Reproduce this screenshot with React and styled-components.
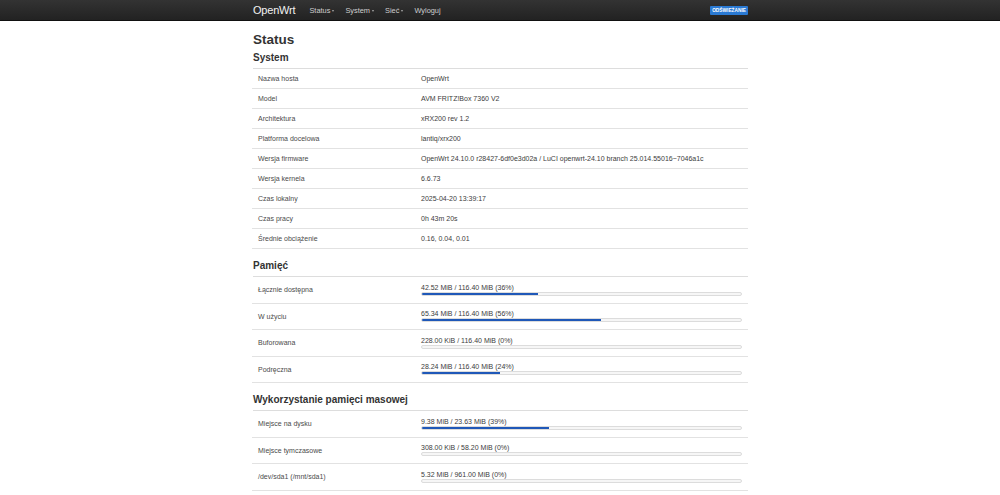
import React from "react"
import styled, { createGlobalStyle } from "styled-components"

const GlobalStyle = createGlobalStyle`
  body {
    margin: 0;
    background: #fff;
    font-family: "Liberation Sans", Arial, sans-serif;
    color: #404040;
  }
`

const Navbar = styled.header`
  height: 21px;
  background: linear-gradient(#333, #222);
  border-bottom: 1px solid #111;
  box-sizing: border-box;
`
const NavInner = styled.div`
  width: 496px;
  margin: 0 auto;
  height: 100%;
  display: flex;
  align-items: center;
`
const Brand = styled.span`
  font-size: 11px;
  color: #f2f2f2;
  margin: 0 14px 0 1px;
  letter-spacing: -0.2px;
`
const Menu = styled.nav`
  display: flex;
  gap: 11px;
  flex: 1;
`
const MenuItem = styled.span`
  font-size: 7.4px;
  color: #cfcfcf;
  display: flex;
  align-items: center;
  gap: 2px;
`
const Caret = styled.span`
  width: 0;
  height: 0;
  border-left: 1.5px solid transparent;
  border-right: 1.5px solid transparent;
  border-top: 2px solid #aaa;
  margin-top: 1px;
`
const RefreshButton = styled.span`
  background: #2a7ad4;
  color: #fff;
  font-size: 4.8px;
  font-weight: bold;
  padding: 2px 2px;
  border-radius: 1px;
  line-height: 5px;
`

const Main = styled.main`
  width: 496px;
  margin: 0 auto;
  padding-top: 10px;
`
const Title = styled.h2`
  font-size: 13.5px;
  font-weight: bold;
  color: #333;
  margin: 0 0 0 1px;
  line-height: 18px;
`
const SectionTitle = styled.h3`
  font-size: 10px;
  font-weight: bold;
  color: #333;
  margin: ${p => (p.$first ? "3px" : "11px")} 0 0 1px;
  line-height: 12px;
  padding-bottom: 4px;
  border-bottom: 1px solid #ddd;
`
const Table = styled.div`
  display: flex;
  flex-direction: column;
`
const Row = styled.div`
  display: grid;
  grid-template-columns: 169px 1fr;
  align-items: center;
  height: ${p => (p.$bar ? "26.5px" : "20px")};
  border-bottom: 1px solid #e2e2e2;
  box-sizing: border-box;
  font-size: 7px;
`
const Label = styled.div`
  padding-left: 6px;
  color: #4a4a4a;
`
const Value = styled.div`
  color: #3c3c3c;
  display: flex;
  flex-direction: column;
  gap: 1px;
  padding-right: 6px;
`
const Bar = styled.div`
  height: 4px;
  background: #f6f6f6;
  border: 1px solid #dcdcdc;
  border-radius: 2px;
  box-sizing: border-box;
  overflow: hidden;
`
const Fill = styled.div`
  height: 100%;
  background: #1f58b8;
`

const system = [
  ["Nazwa hosta", "OpenWrt"],
  ["Model", "AVM FRITZ!Box 7360 V2"],
  ["Architektura", "xRX200 rev 1.2"],
  ["Platforma docelowa", "lantiq/xrx200"],
  ["Wersja firmware", "OpenWrt 24.10.0 r28427-6df0e3d02a / LuCI openwrt-24.10 branch 25.014.55016~7046a1c"],
  ["Wersja kernela", "6.6.73"],
  ["Czas lokalny", "2025-04-20 13:39:17"],
  ["Czas pracy", "0h 43m 20s"],
  ["Średnie obciążenie", "0.16, 0.04, 0.01"],
]

const memory = [
  ["Łącznie dostępna", "42.52 MiB / 116.40 MiB (36%)", 36.5],
  ["W użyciu", "65.34 MiB / 116.40 MiB (56%)", 56.1],
  ["Buforowana", "228.00 KiB / 116.40 MiB (0%)", 0],
  ["Podręczna", "28.24 MiB / 116.40 MiB (24%)", 24.3],
]

const storage = [
  ["Miejsce na dysku", "9.38 MiB / 23.63 MiB (39%)", 39.7],
  ["Miejsce tymczasowe", "308.00 KiB / 58.20 MiB (0%)", 0],
  ["/dev/sda1 (/mnt/sda1)", "5.32 MiB / 961.00 MiB (0%)", 0],
]

const BarRows = ({ rows }) => (
  <Table>
    {rows.map(([label, text, pct]) => (
      <Row $bar key={label}>
        <Label>{label}</Label>
        <Value>
          <span>{text}</span>
          <Bar>
            <Fill style={{ width: `${pct}%` }} />
          </Bar>
        </Value>
      </Row>
    ))}
  </Table>
)

const App = () => (
  <>
    <GlobalStyle />
    <Navbar>
      <NavInner>
        <Brand>OpenWrt</Brand>
        <Menu>
          {["Status", "System", "Sieć"].map(m => (
            <MenuItem key={m}>
              {m}
              <Caret />
            </MenuItem>
          ))}
          <MenuItem>Wyloguj</MenuItem>
        </Menu>
        <RefreshButton>ODŚWIEŻANIE</RefreshButton>
      </NavInner>
    </Navbar>
    <Main>
      <Title>Status</Title>
      <SectionTitle $first>System</SectionTitle>
      <Table>
        {system.map(([label, value]) => (
          <Row key={label}>
            <Label>{label}</Label>
            <Value>{value}</Value>
          </Row>
        ))}
      </Table>
      <SectionTitle>Pamięć</SectionTitle>
      <BarRows rows={memory} />
      <SectionTitle>Wykorzystanie pamięci masowej</SectionTitle>
      <BarRows rows={storage} />
    </Main>
  </>
)

export default App
